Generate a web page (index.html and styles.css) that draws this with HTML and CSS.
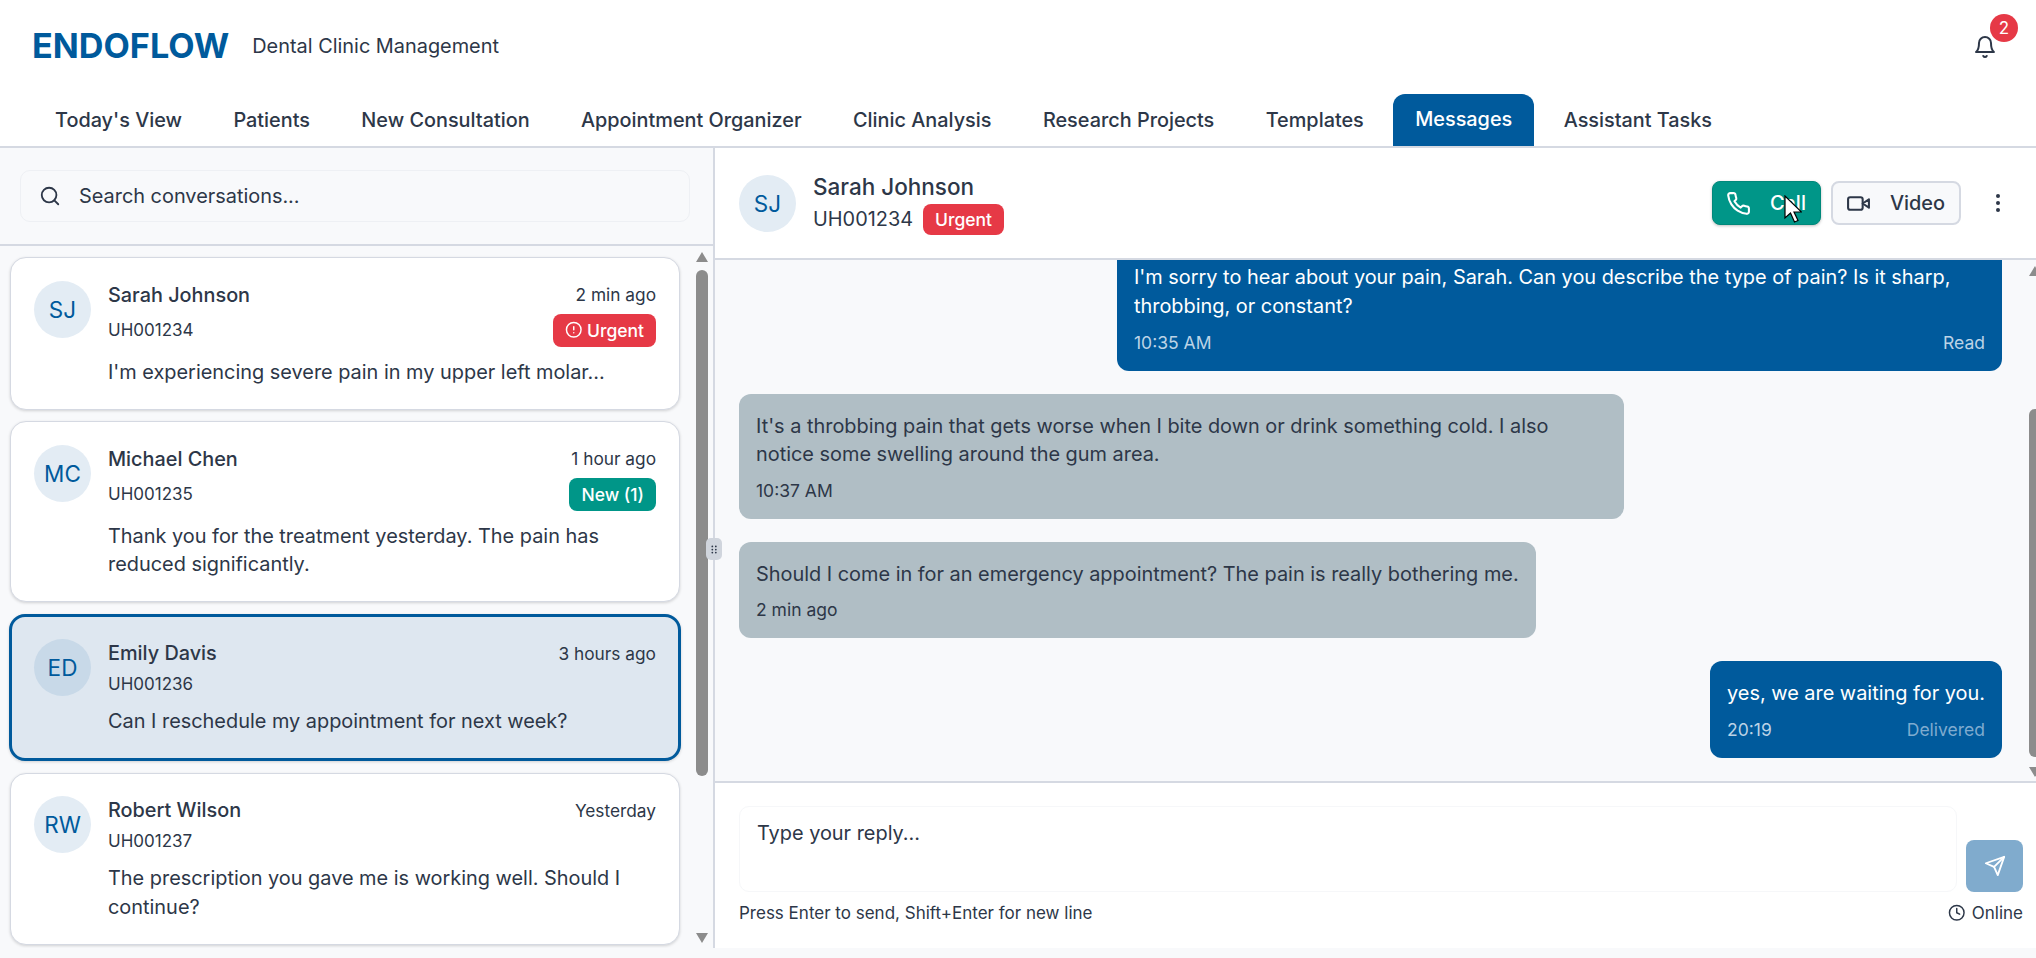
FILE: index.html
```html
<!DOCTYPE html>
<html lang="en">
<head>
    <meta charset="UTF-8">
    <title>ENDOFLOW - Messages</title>
    <link rel="stylesheet" href="styles.css">
</head>
<body>
    <header class="topbar">
        <div class="brand">
            <span class="logo">ENDOFLOW</span>
            <span class="tagline">Dental Clinic Management</span>
        </div>
        <div class="bell">
            <svg class="icon icon-bell" viewBox="0 0 24 24"><path d="M6 8a6 6 0 0 1 12 0c0 7 3 9 3 9H3s3-2 3-9"/><path d="M10.3 21a1.94 1.94 0 0 0 3.4 0"/></svg>
            <span class="bell-count">2</span>
        </div>
    </header>

    <nav class="tabs">
        <a class="tab">Today's View</a>
        <a class="tab">Patients</a>
        <a class="tab">New Consultation</a>
        <a class="tab">Appointment Organizer</a>
        <a class="tab">Clinic Analysis</a>
        <a class="tab">Research Projects</a>
        <a class="tab">Templates</a>
        <a class="tab active">Messages</a>
        <a class="tab">Assistant Tasks</a>
    </nav>

    <main class="layout">
        <aside class="sidebar">
            <div class="search-panel">
                <div class="search-box">
                    <svg class="icon icon-search" viewBox="0 0 24 24"><circle cx="11" cy="11" r="8"/><path d="m21 21-4.3-4.3"/></svg>
                    <span>Search conversations...</span>
                </div>
            </div>
            <div class="list-wrap">
                <div class="conv-list">
                    <div class="conv">
                        <div class="avatar">SJ</div>
                        <div class="conv-body">
                            <div class="conv-row"><span class="conv-name">Sarah Johnson</span><span class="conv-time">2 min ago</span></div>
                            <div class="conv-row conv-meta">
                                <span class="conv-id">UH001234</span>
                                <span class="badge badge-red"><svg class="icon icon-alert" viewBox="0 0 24 24"><circle cx="12" cy="12" r="10"/><path d="M12 8v4"/><path d="M12 16h.01"/></svg>Urgent</span>
                            </div>
                            <p class="conv-text">I'm experiencing severe pain in my upper left molar...</p>
                        </div>
                    </div>
                    <div class="conv">
                        <div class="avatar">MC</div>
                        <div class="conv-body">
                            <div class="conv-row"><span class="conv-name">Michael Chen</span><span class="conv-time">1 hour ago</span></div>
                            <div class="conv-row conv-meta">
                                <span class="conv-id">UH001235</span>
                                <span class="badge badge-teal">New (1)</span>
                            </div>
                            <p class="conv-text">Thank you for the treatment yesterday. The pain has reduced significantly.</p>
                        </div>
                    </div>
                    <div class="conv selected">
                        <div class="avatar">ED</div>
                        <div class="conv-body">
                            <div class="conv-row"><span class="conv-name">Emily Davis</span><span class="conv-time">3 hours ago</span></div>
                            <div class="conv-row conv-meta"><span class="conv-id">UH001236</span></div>
                            <p class="conv-text">Can I reschedule my appointment for next week?</p>
                        </div>
                    </div>
                    <div class="conv">
                        <div class="avatar">RW</div>
                        <div class="conv-body">
                            <div class="conv-row"><span class="conv-name">Robert Wilson</span><span class="conv-time">Yesterday</span></div>
                            <div class="conv-row conv-meta"><span class="conv-id">UH001237</span></div>
                            <p class="conv-text">The prescription you gave me is working well. Should I continue?</p>
                        </div>
                    </div>
                </div>
                <div class="scrollbar scrollbar-list">
                    <span class="arrow arrow-up"></span>
                    <span class="thumb"></span>
                    <span class="arrow arrow-down"></span>
                </div>
            </div>
            <div class="resize-handle">
                <svg viewBox="0 0 8 10"><circle cx="1.5" cy="1.5" r="1"/><circle cx="5.5" cy="1.5" r="1"/><circle cx="1.5" cy="5" r="1"/><circle cx="5.5" cy="5" r="1"/><circle cx="1.5" cy="8.5" r="1"/><circle cx="5.5" cy="8.5" r="1"/></svg>
            </div>
        </aside>

        <section class="chat">
            <div class="chat-head">
                <div class="avatar">SJ</div>
                <div class="chat-who">
                    <div class="chat-name">Sarah Johnson</div>
                    <div class="chat-sub">
                        <span>UH001234</span>
                        <span class="badge badge-red">Urgent</span>
                    </div>
                </div>
                <div class="chat-actions">
                    <button class="btn btn-call">
                        <svg class="icon icon-btn" viewBox="0 0 24 24"><path d="M22 16.92v3a2 2 0 0 1-2.18 2 19.79 19.79 0 0 1-8.63-3.07 19.5 19.5 0 0 1-6-6 19.79 19.79 0 0 1-3.07-8.67A2 2 0 0 1 4.11 2h3a2 2 0 0 1 2 1.72 12.84 12.84 0 0 0 .7 2.81 2 2 0 0 1-.45 2.11L8.09 9.91a16 16 0 0 0 6 6l1.27-1.27a2 2 0 0 1 2.11-.45 12.84 12.84 0 0 0 2.81.7A2 2 0 0 1 22 16.92z"/></svg>
                        Call
                        <svg class="cursor" viewBox="0 0 18 28"><path d="M1 1v22l5.5-5 4 9 3.5-1.5-4-8.5h7.5z"/></svg>
                    </button>
                    <button class="btn btn-video">
                        <svg class="icon icon-btn" viewBox="0 0 24 24"><path d="m22 8-6 4 6 4V8Z"/><rect x="2" y="6" width="14" height="12" rx="2"/></svg>
                        Video
                    </button>
                    <svg class="more" viewBox="0 0 24 24"><circle cx="12" cy="5" r="2"/><circle cx="12" cy="12" r="2"/><circle cx="12" cy="19" r="2"/></svg>
                </div>
            </div>

            <div class="thread-wrap">
                <div class="thread">
                    <div class="msg msg-out">
                        <p>I'm sorry to hear about your pain, Sarah. Can you describe the type of pain? Is it sharp, throbbing, or constant?</p>
                        <div class="msg-foot"><span>10:35 AM</span><span>Read</span></div>
                    </div>
                    <div class="msg msg-in">
                        <p>It's a throbbing pain that gets worse when I bite down or drink something cold. I also notice some swelling around the gum area.</p>
                        <div class="msg-foot"><span>10:37 AM</span></div>
                    </div>
                    <div class="msg msg-in">
                        <p>Should I come in for an emergency appointment? The pain is really bothering me.</p>
                        <div class="msg-foot"><span>2 min ago</span></div>
                    </div>
                    <div class="msg msg-out">
                        <p>yes, we are waiting for you.</p>
                        <div class="msg-foot"><span>20:19</span><span class="msg-status-dim">Delivered</span></div>
                    </div>
                </div>
                <div class="scrollbar scrollbar-thread">
                    <span class="arrow arrow-up"></span>
                    <span class="thumb"></span>
                    <span class="arrow arrow-down"></span>
                </div>
            </div>

            <div class="composer">
                <div class="composer-row">
                    <div class="reply-box">Type your reply...</div>
                    <button class="send">
                        <svg class="icon icon-send" viewBox="0 0 24 24"><path d="m22 2-7 20-4-9-9-4Z"/><path d="M22 2 11 13"/></svg>
                    </button>
                </div>
                <div class="composer-foot">
                    <span>Press Enter to send, Shift+Enter for new line</span>
                    <span class="status">
                        <svg class="icon icon-clock" viewBox="0 0 24 24"><circle cx="12" cy="12" r="10"/><path d="M12 6v6l4 2"/></svg>
                        Online
                    </span>
                </div>
            </div>
        </section>
    </main>
</body>
</html>
```

FILE: styles.css
```css
* {
    box-sizing: border-box;
}

html, body {
    margin: 0;
    height: 958px;
    overflow: hidden;
}

body {
    font-family: 'Inter', 'Liberation Sans', sans-serif;
    background-color: #f8f9fb;
    color: #2d3748;
    display: flex;
    flex-direction: column;
}

.icon {
    fill: none;
    stroke: currentColor;
    stroke-width: 2;
    stroke-linecap: round;
    stroke-linejoin: round;
    flex-shrink: 0;
}

/* top bar */
.topbar {
    height: 94px;
    background-color: #fff;
    display: flex;
    align-items: flex-start;
    justify-content: space-between;
    padding: 26px 39px 0 32px;
}

.brand {
    display: flex;
    align-items: center;
    gap: 23px;
}

.logo {
    font-size: 34.2px;
    line-height: 40px;
    font-weight: 700;
    color: #005a9c;
}

.tagline {
    font-size: 19.9px;
    color: #2d3748;
}

.bell {
    position: relative;
    width: 24px;
    height: 24px;
    margin-top: 9px;
}

.icon-bell {
    width: 24px;
    height: 24px;
    display: block;
}

.bell-count {
    position: absolute;
    top: -21px;
    left: 17px;
    width: 28px;
    height: 28px;
    border-radius: 50%;
    background-color: #e63946;
    color: #fff;
    font-size: 17px;
    line-height: 28px;
    text-align: center;
}

/* tabs */
.tabs {
    height: 54px;
    background-color: #fff;
    border-bottom: 2px solid #d5d9e2;
    padding-left: 33px;
    display: flex;
    gap: 7.4px;
}

.tab {
    padding: 0 22px;
    height: 52px;
    line-height: 53px;
    font-size: 19.85px;
    font-weight: 500;
    color: #2d3748;
    border-radius: 12px 12px 0 0;
}

.tab.active {
    background-color: #005a9c;
    color: #fff;
    line-height: 50px;
}

/* main split */
.layout {
    display: flex;
    height: 800px;
}

.sidebar {
    position: relative;
    width: 715px;
    border-right: 2px solid #d5d9e2;
    display: flex;
    flex-direction: column;
}

.search-panel {
    height: 98px;
    padding: 22px 23px 0 20px;
    border-bottom: 2px solid #d5d9e2;
}

.search-box {
    height: 52px;
    display: flex;
    align-items: center;
    gap: 18px;
    padding-left: 18px;
    background-color: #f8f9fb;
    border: 1px solid #eef0f4;
    border-radius: 10px;
    font-size: 19.9px;
}

.icon-search {
    width: 22px;
    height: 22px;
}

.list-wrap {
    flex: 1;
    display: flex;
    min-height: 0;
}

.conv-list {
    width: 694px;
    padding: 11px 14px 0 10px;
    display: flex;
    flex-direction: column;
    gap: 11.5px;
    overflow: hidden;
}

.conv {
    flex-shrink: 0;
    display: flex;
    gap: 17px;
    padding: 22.5px 23px;
    background-color: #fff;
    border: 1px solid #d5d9e2;
    border-radius: 16px;
    box-shadow: 0 1px 3px rgba(0, 0, 0, 0.16);
}

.conv.selected {
    background-color: #dee7f0;
    border: 3px solid #005a9c;
    padding: 22.5px 22px;
    margin: 0 -1px;
}

.avatar {
    width: 57px;
    height: 57px;
    flex-shrink: 0;
    border-radius: 50%;
    background-color: #e3ecf4;
    color: #005a9c;
    font-size: 22.5px;
    line-height: 57px;
    text-align: center;
}

.selected .avatar {
    background-color: #c8d9e8;
}

.conv-body {
    flex: 1;
    min-width: 0;
}

.conv-row {
    display: flex;
    align-items: center;
    justify-content: space-between;
}

.conv-name {
    font-size: 19.85px;
    line-height: 28px;
    font-weight: 500;
}

.conv-time {
    font-size: 17.3px;
}

.conv-meta {
    margin: 5px 0 11px;
    min-height: 24px;
}

.conv-id {
    font-size: 17px;
    line-height: 24px;
}

.conv-text {
    margin: 0;
    font-size: 19.9px;
    line-height: 28.6px;
}

.badge {
    display: inline-flex;
    align-items: center;
    gap: 5px;
    height: 33px;
    padding: 0 12px;
    border-radius: 8px;
    color: #fff;
    font-size: 17.5px;
    font-weight: 500;
}

.badge-red {
    background-color: #e63946;
}

.badge-teal {
    background-color: #009688;
}

.icon-alert {
    width: 17.5px;
    height: 17.5px;
}

/* fake scrollbars */
.scrollbar {
    display: flex;
    flex-direction: column;
    align-items: center;
}

.scrollbar-list {
    width: 12px;
    margin: 6px 0 5px 2px;
}

.scrollbar-list .thumb {
    height: 506px;
    margin: 8px 0 auto;
}

.thumb {
    width: 100%;
    background-color: #8c8c8c;
    border-radius: 6px;
}

.arrow {
    width: 0;
    height: 0;
    border-left: 6px solid transparent;
    border-right: 6px solid transparent;
}

.arrow-up {
    border-bottom: 10px solid #8c8c8c;
}

.arrow-down {
    border-top: 10px solid #8c8c8c;
}

.resize-handle {
    position: absolute;
    right: -9px;
    top: 390px;
    width: 16px;
    height: 22px;
    background-color: #d0d5dd;
    border-radius: 5px;
    display: flex;
    align-items: center;
    justify-content: center;
}

.resize-handle svg {
    width: 7px;
    height: 9px;
    fill: #2d3748;
}

/* chat */
.chat {
    flex: 1;
    min-width: 0;
    display: flex;
    flex-direction: column;
    overflow: hidden;
}

.chat-head {
    height: 112px;
    flex-shrink: 0;
    background-color: #fff;
    border-bottom: 2px solid #d5d9e2;
    padding: 0 26px 0 24px;
    display: flex;
    align-items: center;
    gap: 17px;
}

.chat-name {
    font-size: 22.5px;
    font-weight: 500;
    line-height: 30px;
}

.chat-sub {
    display: flex;
    align-items: center;
    gap: 10px;
    font-size: 19.9px;
    margin-top: 2px;
}

.chat-sub .badge {
    height: 31px;
}

.chat-actions {
    margin-left: auto;
    display: flex;
    align-items: center;
}

.btn {
    height: 44px;
    display: flex;
    align-items: center;
    gap: 19px;
    padding: 0 14px 0 13px;
    border-radius: 8px;
    font-family: inherit;
    font-size: 19.9px;
    font-weight: 500;
    position: relative;
}

.btn-call {
    background-color: #009688;
    border: 1px solid #00897b;
    color: #fff;
    margin-right: 10px;
    box-shadow: 0 1px 3px rgba(0, 0, 0, 0.25);
}

.btn-video {
    background-color: #f8f9fb;
    border: 2px solid #d5d9e2;
    color: #2d3748;
    margin-right: 25px;
}

.icon-btn {
    width: 25px;
    height: 25px;
}

.cursor {
    position: absolute;
    left: 71px;
    top: 13px;
    width: 18px;
    height: 28px;
    fill: #fff;
    stroke: #000;
    stroke-width: 1.2;
}

.more {
    width: 24px;
    height: 24px;
    fill: #2d3748;
}

.thread-wrap {
    flex: 1;
    min-height: 0;
    display: flex;
}

.thread {
    flex: 1;
    min-width: 0;
    display: flex;
    flex-direction: column;
    justify-content: flex-end;
    gap: 23px;
    padding: 0 27px 23px 24px;
    overflow: hidden;
}

.scrollbar-thread {
    width: 12px;
    flex-shrink: 0;
    padding-top: 6px;
    padding-bottom: 4px;
    margin-right: -5px;
}

.scrollbar-thread .thumb {
    height: 348px;
    margin: auto 0 10px;
}

.msg {
    flex-shrink: 0;
    max-width: 885px;
    padding: 18px 17px 17px;
    border-radius: 12px;
    font-size: 19.9px;
    line-height: 28.6px;
}

.msg p {
    margin: 0;
}

.msg-in {
    align-self: flex-start;
    background-color: #b0bec5;
    color: #2d3748;
}

.msg-out {
    align-self: flex-end;
    background-color: #005a9c;
    color: #fff;
}

.msg-foot {
    display: flex;
    justify-content: space-between;
    gap: 40px;
    font-size: 17.5px;
    line-height: 22px;
    margin-top: 11px;
}

.msg-out .msg-foot {
    color: #bcd3e6;
}

.msg-out .msg-status-dim {
    color: #7fabcf;
}

.composer {
    height: 167px;
    flex-shrink: 0;
    background-color: #fff;
    border-top: 2px solid #d5d9e2;
    padding: 23px 13px 0 24px;
}

.composer-row {
    display: flex;
    align-items: flex-end;
    gap: 9px;
}

.reply-box {
    flex: 1;
    height: 86px;
    padding: 12px 17px;
    background-color: #fff;
    border: 1px solid #f6f7f9;
    border-radius: 10px;
    font-size: 19.9px;
    line-height: 28px;
}

.send {
    width: 57px;
    height: 52px;
    border: none;
    border-radius: 8px;
    background-color: #80abcd;
    color: #fff;
    display: flex;
    align-items: center;
    justify-content: center;
}

.icon-send {
    width: 22px;
    height: 22px;
}

.composer-foot {
    display: flex;
    justify-content: space-between;
    align-items: center;
    margin-top: 11px;
    font-size: 17px;
}

.status {
    display: flex;
    align-items: center;
    gap: 6px;
}

.icon-clock {
    width: 17.5px;
    height: 17.5px;
}
```
